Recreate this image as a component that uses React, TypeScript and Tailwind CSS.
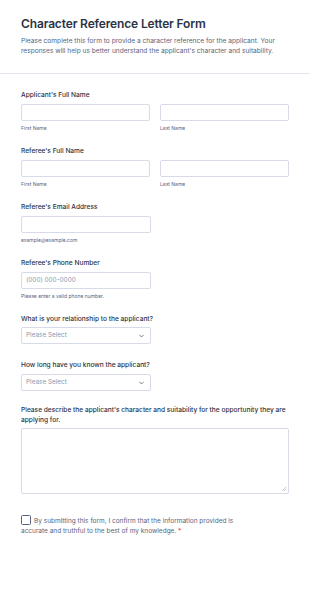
import React from "react";

const font = { fontFamily: "Inter, 'Noto Sans', sans-serif" };

function Label({ children }: { children: React.ReactNode }) {
  return (
    <div className="text-[6.6px] leading-[10px] font-medium text-[#2c3345]">
      {children}
    </div>
  );
}

function Sub({ children }: { children: React.ReactNode }) {
  return <div className="mt-[4px] text-[5px] leading-[7px] text-[#57647e]">{children}</div>;
}

function Input({ placeholder, className = "" }: { placeholder?: string; className?: string }) {
  return (
    <div
      className={`h-[17px] rounded-[2px] border border-[#d8dae9] bg-white px-[4px] flex items-center text-[6.4px] text-[#8d96ab] ${className}`}
    >
      {placeholder}
    </div>
  );
}

function Select() {
  return (
    <div className="w-[130px] h-[17px] rounded-[2px] border border-[#d8dae9] bg-white pl-[4px] pr-[6px] flex items-center justify-between text-[6.4px] text-[#8d96ab]">
      <span>Please Select</span>
      <svg width="5" height="4" viewBox="0 0 10 6" fill="none">
        <path d="M1 1l4 4 4-4" stroke="#57647e" strokeWidth="1.6" strokeLinecap="round" strokeLinejoin="round" />
      </svg>
    </div>
  );
}

export default function App() {
  return (
    <div className="w-[310px] min-h-[601px] bg-white" style={font}>
      <div className="px-[21px] pt-[15px] pb-[17px] border-b border-[#e3e5ee]">
        <h1 className="text-[12px] leading-[18px] font-semibold text-[#2c3345] tracking-[-0.15px]">
          Character Reference Letter Form
        </h1>
        <p className="mt-[3px] text-[6.6px] leading-[10px] text-[#57647e]">
          Please complete this form to provide a character reference for the applicant. Your
          responses will help us better understand the applicant's character and suitability.
        </p>
      </div>

      <div className="px-[21px] pt-[16px] flex flex-col">
        {["Applicant's Full Name", "Referee's Full Name"].map((l, i) => (
          <div key={l} className={i ? "mt-[14px]" : ""}>
            <Label>{l}</Label>
            <div className="mt-[4px] grid grid-cols-2 gap-[10px]">
              <div>
                <Input />
                <Sub>First Name</Sub>
              </div>
              <div>
                <Input />
                <Sub>Last Name</Sub>
              </div>
            </div>
          </div>
        ))}

        <div className="mt-[14px]">
          <Label>Referee's Email Address</Label>
          <Input className="mt-[4px] w-[130px]" />
          <Sub>example@example.com</Sub>
        </div>

        <div className="mt-[14px]">
          <Label>Referee's Phone Number</Label>
          <Input className="mt-[4px] w-[130px]" placeholder="(000) 000-0000" />
          <Sub>Please enter a valid phone number.</Sub>
        </div>

        <div className="mt-[14px]">
          <Label>What is your relationship to the applicant?</Label>
          <div className="mt-[3px]">
            <Select />
          </div>
        </div>

        <div className="mt-[16px]">
          <Label>How long have you known the applicant?</Label>
          <div className="mt-[4px]">
            <Select />
          </div>
        </div>

        <div className="mt-[14px]">
          <Label>
            Please describe the applicant's character and suitability for the opportunity they are
            applying for.
          </Label>
          <div className="mt-[3px] relative h-[66px] rounded-[2px] border border-[#d8dae9] bg-white">
            <svg className="absolute right-[2px] bottom-[2px]" width="4" height="4" viewBox="0 0 4 4">
              <path d="M4 0L0 4M4 2L2 4" stroke="#a0a6b8" strokeWidth="0.6" />
            </svg>
          </div>
        </div>

        <div className="mt-[21px] text-[6.5px] leading-[9.5px] text-[#57647e]">
          <span className="inline-block align-[-2px] w-[10px] h-[10px] mr-[3px] rounded-[1.5px] border border-[#57647e]" />
          By submitting this form, I confirm that the information provided is
          <br />
          accurate and truthful to the best of my knowledge. <span className="text-[#f23a3c]">*</span>
        </div>
      </div>
    </div>
  );
}
